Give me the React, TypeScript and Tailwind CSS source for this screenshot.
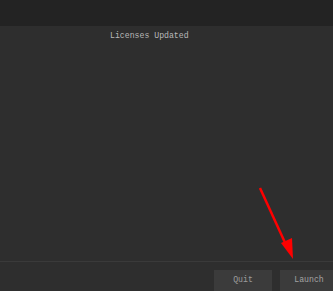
const mono = { fontFamily: '"Liberation Mono", "DejaVu Sans Mono", monospace' };

const App = () => {
  return (
    <div className="relative w-[333px] h-[291px] overflow-hidden bg-[#2e2e2e] flex flex-col" style={mono}>
      <div className="h-[26px] bg-[#232323] shrink-0" />
      <div className="flex-1 pt-[5px] pl-[110px]">
        <p className="text-[8.2px] leading-[10px] text-[#b8b8b8] whitespace-pre">Licenses Updated</p>
      </div>
      <div className="h-[30px] shrink-0 border-t border-[#3a3a3a] pt-[8px] pl-[214px] flex gap-[8px]">
        <button className="w-[58px] h-[22px] shrink-0 bg-[#3b3b3b] text-[8.2px] text-[#9c9c9c] pb-[1px]">Quit</button>
        <button className="w-[58px] h-[22px] shrink-0 bg-[#3b3b3b] text-[8.2px] text-[#a3a3a3] pb-[1px]">Launch</button>
      </div>
      <svg className="absolute left-0 top-0 pointer-events-none" width="333" height="291" viewBox="0 0 333 291">
        <line x1="260" y1="188" x2="287" y2="247" stroke="#ff0000" strokeWidth="2.5" />
        <polygon points="281,243 292,238 293,259" fill="#ff0000" />
      </svg>
    </div>
  );
};

export default App;
